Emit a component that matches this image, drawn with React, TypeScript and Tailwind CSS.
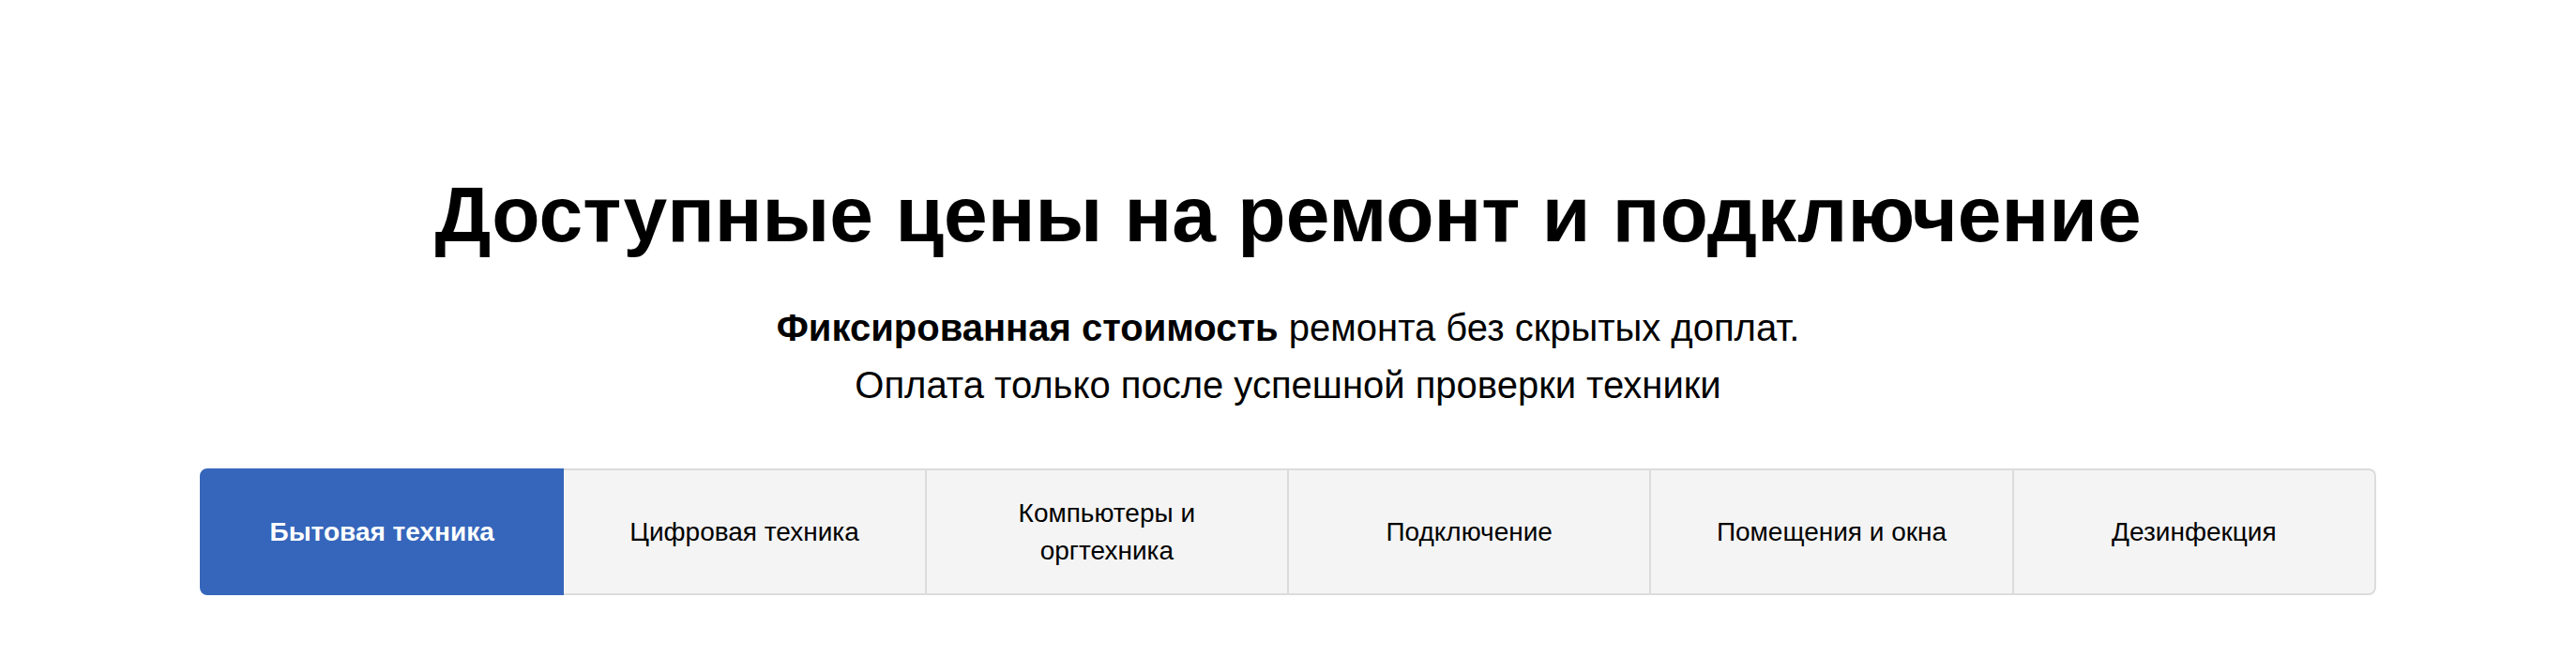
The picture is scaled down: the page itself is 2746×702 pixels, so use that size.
import React from "react";

const tabs = [
  "Бытовая техника",
  "Цифровая техника",
  "Компьютеры и\nоргтехника",
  "Подключение",
  "Помещения и окна",
  "Дезинфекция",
];

export default function App() {
  return (
    <div className="w-full h-[702px] bg-white flex flex-col items-center" style={{ fontFamily: '"Liberation Sans", Arial, sans-serif' }}>
      <h1 className="mt-[176px] text-[84px] leading-[104px] font-bold text-black text-center">
        Доступные цены на ремонт и подключение
      </h1>
      <p className="mt-[39px] text-[40px] leading-[61px] text-black text-center">
        <b>Фиксированная стоимость</b> ремонта без скрытых доплат.
        <br />
        Оплата только после успешной проверки техники
      </p>
      <div className="mt-[58px] w-[2320px] h-[135px] flex">
        {tabs.map((t, i) => (
          <div
            key={i}
            className={
              i === 0
                ? "flex-1 flex items-center justify-center bg-[#3566bb] border-2 border-[#3566bb] rounded-l-[8px] text-white font-bold text-[28px] leading-[40px] text-center"
                : i === tabs.length - 1
                ? "flex-1 flex items-center justify-center bg-[#f4f4f4] border-y-2 border-r-2 border-[#dcdcdc] rounded-r-[8px] text-black text-[28px] leading-[40px] text-center whitespace-pre-line"
                : "flex-1 flex items-center justify-center bg-[#f4f4f4] border-y-2 border-r-2 border-[#dcdcdc] text-black text-[28px] leading-[40px] text-center whitespace-pre-line"
            }
          >
            {t}
          </div>
        ))}
      </div>
    </div>
  );
}
